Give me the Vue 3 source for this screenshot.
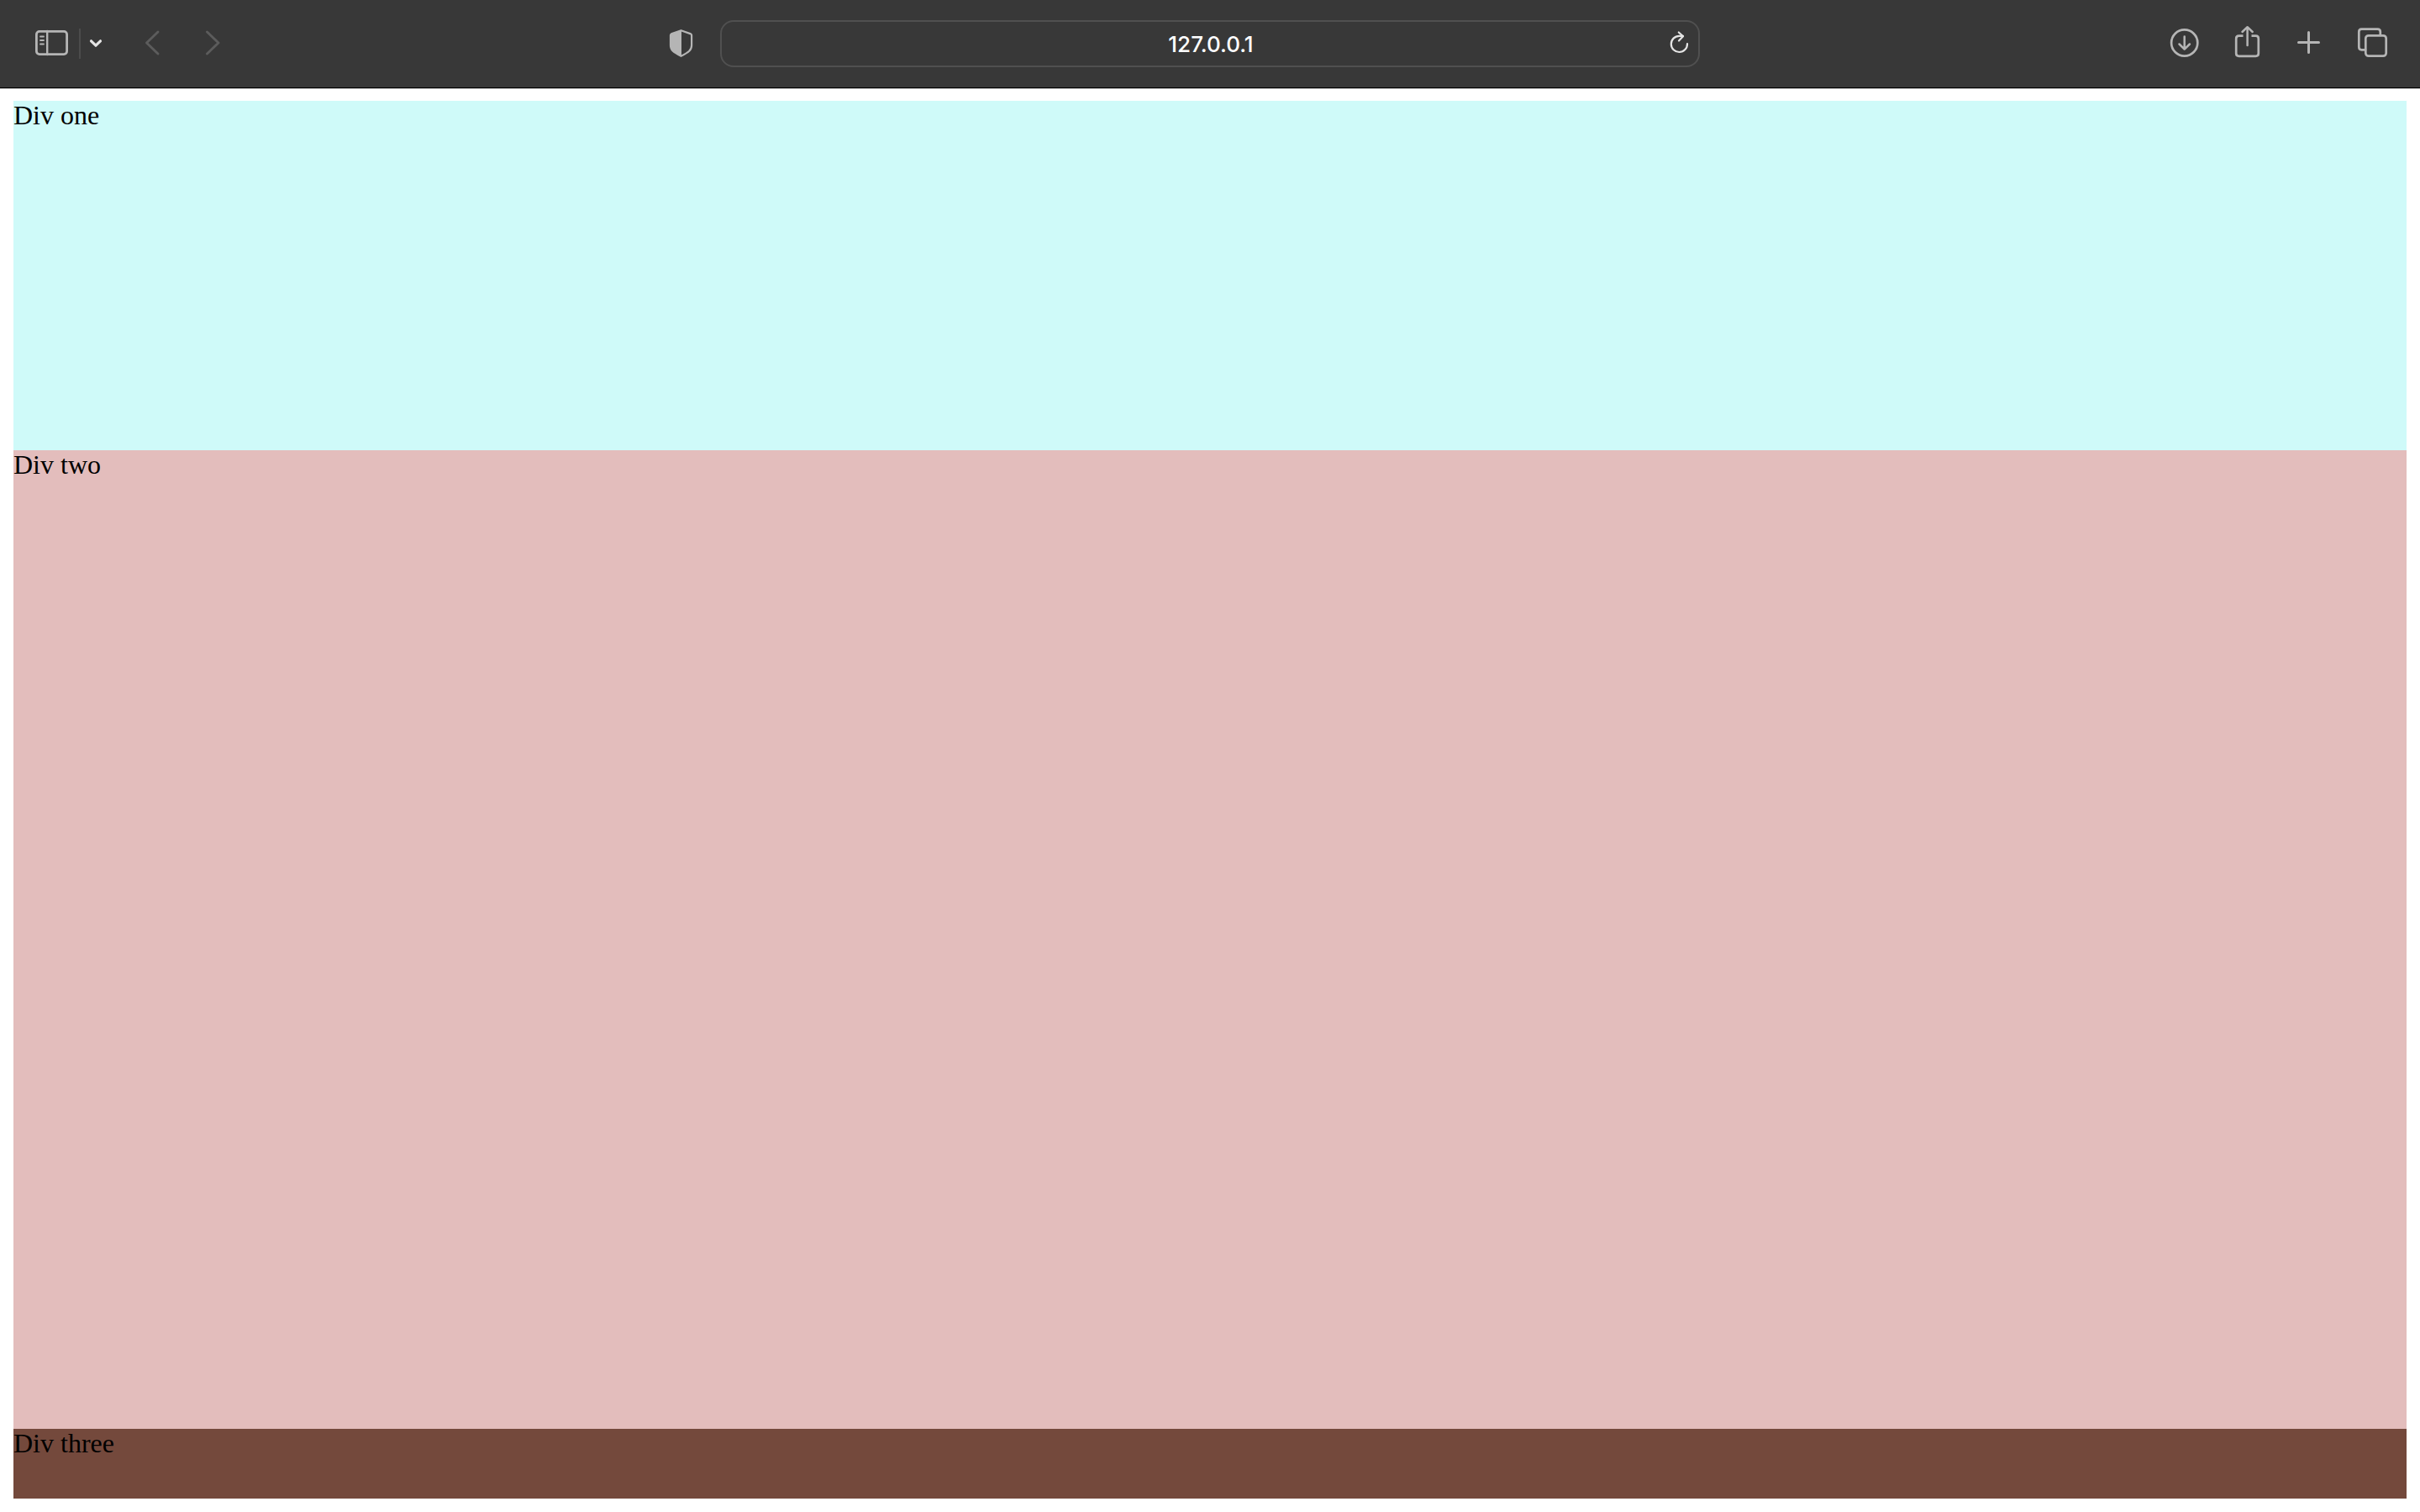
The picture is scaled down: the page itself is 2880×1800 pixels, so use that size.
<script setup>
import { ref } from 'vue'

const address = ref('127.0.0.1')
const sections = [
  { id: 'one', label: 'Div one' },
  { id: 'two', label: 'Div two' },
  { id: 'three', label: 'Div three' },
]
</script>

<template>
  <div class="window">
    <header class="toolbar">
      <div class="group start">
        <button type="button" class="tool" aria-label="Show sidebar">
          <svg viewBox="0 0 44 44" class="icon">
            <rect x="3.4" y="7.4" width="36.2" height="27.2" rx="3.5" stroke-width="2.8" />
            <path d="M16.2 7v28" stroke-width="2.4" />
            <path d="M8 13.5h4M8 18h4M8 22.5h4" stroke-width="1.8" />
          </svg>
        </button>
        <span class="divider"></span>
        <button type="button" class="tool narrow bright" aria-label="Sidebar options">
          <svg viewBox="0 0 20 44" class="icon">
            <path d="M4.5 18.8L10 24.2l5.500-5.400" stroke-width="3.2" />
          </svg>
        </button>
        <nav class="history" aria-label="History">
          <button type="button" class="tool dim" aria-label="Back">
            <svg viewBox="0 0 44 44" class="icon">
              <path d="M28 8L14.500 21L28 34" stroke-width="2.9" />
            </svg>
          </button>
          <button type="button" class="tool dim" aria-label="Forward">
            <svg viewBox="0 0 44 44" class="icon">
              <path d="M14.500 8L28 21L14.500 34" stroke-width="2.9" />
            </svg>
          </button>
        </nav>
        <button type="button" class="tool shield" aria-label="Privacy report">
          <svg viewBox="0 0 44 44" class="icon">
            <path d="M21.500 6.200L33.200 10.400Q34.100 10.800 34.100 12V24C34.100 30 30 32.500 21.500 36.800C13 32.500 9 30 9 24V12Q9 10.800 9.900 10.400Z" stroke-width="2.2" />
            <path d="M22 6V36.500C13 32.500 9 30 9 24V11Z" fill="currentColor" stroke="none" />
          </svg>
        </button>
      </div>

      <div class="field">
        <input v-model="address" type="text" class="address" aria-label="Address" spellcheck="false" />
        <button type="button" class="tool bright reload" aria-label="Reload">
          <svg viewBox="0 0 44 44" class="icon">
            <path d="M31 22.200A9.600 9.600 0 1 1 21.400 12.800H26" stroke-width="2.2" />
            <path d="M20.800 8.500L26 13.300L21 18.500" stroke-width="2.2" />
          </svg>
        </button>
      </div>

      <div class="group end">
        <button type="button" class="tool" aria-label="Downloads">
          <svg viewBox="0 0 44 44" class="icon">
            <circle cx="22.7" cy="21" r="15.6" />
            <path d="M22.7 13.500V28.500M16.500 22.500L22.700 28.700L28.900 22.500" stroke-width="2.5" />
          </svg>
        </button>
        <button type="button" class="tool" aria-label="Share">
          <svg viewBox="0 0 44 44" class="icon">
            <path d="M17.500 12.700H12.500Q9.200 12.700 9.200 16V33.500Q9.200 36.800 12.500 36.800H32.500Q35.800 36.800 35.800 33.500V16Q35.800 12.700 32.500 12.700H27.500" stroke-linecap="butt" />
            <path d="M22.600 24V2.700M16.500 8L22.600 2.200L28.700 8" stroke-width="2.5" />
          </svg>
        </button>
        <button type="button" class="tool" aria-label="New tab">
          <svg viewBox="0 0 44 44" class="icon">
            <path d="M20.500 8.500V32.500M8.500 20.500H32.500" stroke-width="3" />
          </svg>
        </button>
        <button type="button" class="tool" aria-label="Tab overview">
          <svg viewBox="0 0 44 44" class="icon">
            <rect x="13.300" y="12.300" width="24.400" height="24.400" rx="3.500" />
            <path d="M30.800 12V8Q30.800 4.700 27.500 4.700H8.500Q5.300 4.700 5.300 8V26Q5.300 29.300 8.500 29.300H13" />
          </svg>
        </button>
      </div>
    </header>

    <main class="page">
      <div v-for="section in sections" :key="section.id" :class="['block', section.id]">
        {{ section.label }}
      </div>
    </main>
  </div>
</template>

<style>
body {
  margin: 0;
  background: #fff;
}
</style>

<style scoped>
.window {
  box-sizing: border-box;
  display: flex;
  flex-direction: column;
  min-height: 100vh;
}

.toolbar {
  display: grid;
  grid-template-columns: minmax(0, 857fr) minmax(0, 1166fr) minmax(0, 857fr);
  align-items: center;
  padding: 24px 0;
  background: #383838;
  border-bottom: 1px solid #000;
  box-shadow: 0 1px 0 #b4b4b4;
}

.group {
  display: flex;
  align-items: center;
}

.start {
  padding: 0 24px 0 40px;
}

.end {
  justify-content: flex-end;
  gap: 31px;
  padding-right: 34px;
}

.history {
  display: flex;
  gap: 28px;
  margin-left: 36px;
}

.tool {
  display: block;
  flex: none;
  width: 44px;
  height: 44px;
  padding: 0;
  border: 0;
  background: none;
  color: #b5b5b5;
}

.narrow {
  width: 20px;
}

.bright {
  color: #e4e4e4;
}

.dim {
  color: #5c5c5c;
}

.icon {
  display: block;
  width: 100%;
  height: 100%;
  fill: none;
  stroke: currentColor;
  stroke-width: 2.7;
  stroke-linecap: round;
  stroke-linejoin: round;
}

.divider {
  width: 2px;
  height: 36px;
  margin: 0 8px 0 10px;
  background: #4c4c4c;
}

.shield {
  margin-left: auto;
}

.field {
  position: relative;
  display: flex;
  box-sizing: border-box;
  height: 56px;
  border: 2px solid #505050;
  border-radius: 16px;
}

.address {
  flex: 1;
  min-width: 0;
  padding: 0 44px 0 46px;
  border: 0;
  outline: 0;
  background: none;
  color: #fff;
  font: 500 26px Inter, sans-serif;
  text-align: center;
}

.reload {
  position: absolute;
  top: 4px;
  right: 0;
}

.page {
  display: grid;
  flex: 1;
  grid-template-rows: 5fr 14fr 1fr;
  padding: 15px 16px 16px;
}

.block {
  color: #000;
  font: 32px/35px "Liberation Serif", serif;
}

.one {
  background: #cffaf9;
}

.two {
  background: #e3bdbc;
}

.three {
  background: #74493c;
}
</style>
